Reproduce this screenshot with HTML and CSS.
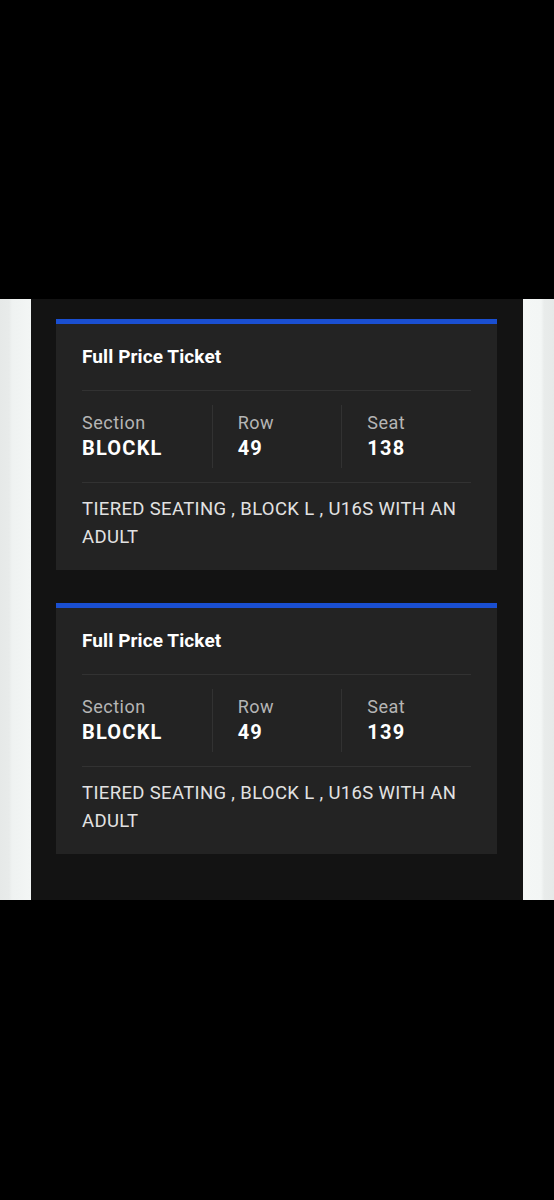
FILE: index.html
```html
<!DOCTYPE html>
<html lang="en">
<head>
  <meta charset="UTF-8" />
  <title>Tickets</title>
  <link rel="stylesheet" href="styles.css">
</head>
<body>
  <div class="top-bar"></div>
  <div class="frame">
    <div class="edge edge-left"></div>
    <div class="panel">
      <div class="ticket">
        <div class="ticket-title">Full Price Ticket</div>
        <div class="seat-info">
          <div class="seat-col">
            <div class="seat-label">Section</div>
            <div class="seat-value">BLOCKL</div>
          </div>
          <div class="seat-col">
            <div class="seat-label">Row</div>
            <div class="seat-value">49</div>
          </div>
          <div class="seat-col">
            <div class="seat-label">Seat</div>
            <div class="seat-value">138</div>
          </div>
        </div>
        <div class="ticket-desc">TIERED SEATING , BLOCK L , U16S WITH AN ADULT</div>
      </div>

      <div class="ticket">
        <div class="ticket-title">Full Price Ticket</div>
        <div class="seat-info">
          <div class="seat-col">
            <div class="seat-label">Section</div>
            <div class="seat-value">BLOCKL</div>
          </div>
          <div class="seat-col">
            <div class="seat-label">Row</div>
            <div class="seat-value">49</div>
          </div>
          <div class="seat-col">
            <div class="seat-label">Seat</div>
            <div class="seat-value">139</div>
          </div>
        </div>
        <div class="ticket-desc">TIERED SEATING , BLOCK L , U16S WITH AN ADULT</div>
      </div>
    </div>
    <div class="edge edge-right"></div>
  </div>
</body>
</html>
```

FILE: styles.css
```css
body {
  margin: 0;
  background-color: #000;
  font-family: 'Roboto', 'Noto Sans', sans-serif;
  min-height: 1200px;
}
.top-bar {
  height: 299px;
}
.frame {
  display: flex;
  height: 601px;
}
.edge {
  width: 31px;
  flex-shrink: 0;
}
.edge-left {
  background: linear-gradient(to right, #e6e9e8 0, #e8ebea 9px, #eff2f1 12px, #f3f6f5 31px);
}
.edge-right {
  background: linear-gradient(to right, #f4f7f6 0, #f3f6f5 18px, #e9eceb 21px, #e6e9e8 31px);
}
.panel {
  flex: 1;
  background-color: #131313;
  padding: 20px 26px 0 25px;
}
.ticket {
  background-color: #232323;
  border-top: 5px solid #1a4fd1;
  padding: 0 26px;
  margin-bottom: 33px;
}
.ticket-title {
  color: #fff;
  font-size: 19px;
  font-weight: 700;
  letter-spacing: 0.1px;
  line-height: 24px;
  padding: 21px 0 21px;
  border-bottom: 1px solid #323232;
}
.seat-info {
  display: grid;
  grid-template-columns: repeat(3, 1fr);
  margin: 14px 0;
}
.seat-col {
  padding: 6px 0 7px;
}
.seat-col + .seat-col {
  border-left: 1px solid #323232;
  padding-left: 25px;
}
.seat-label {
  color: #b5b5b5;
  font-size: 18px;
  letter-spacing: 0.5px;
  line-height: 24px;
}
.seat-value {
  color: #fff;
  font-size: 20px;
  font-weight: 700;
  letter-spacing: 1.2px;
  line-height: 26px;
}
.ticket-desc {
  border-top: 1px solid #323232;
  color: #e2e2e2;
  font-size: 18.5px;
  letter-spacing: 0.35px;
  line-height: 28px;
  padding: 12px 0 19px;
}
```
